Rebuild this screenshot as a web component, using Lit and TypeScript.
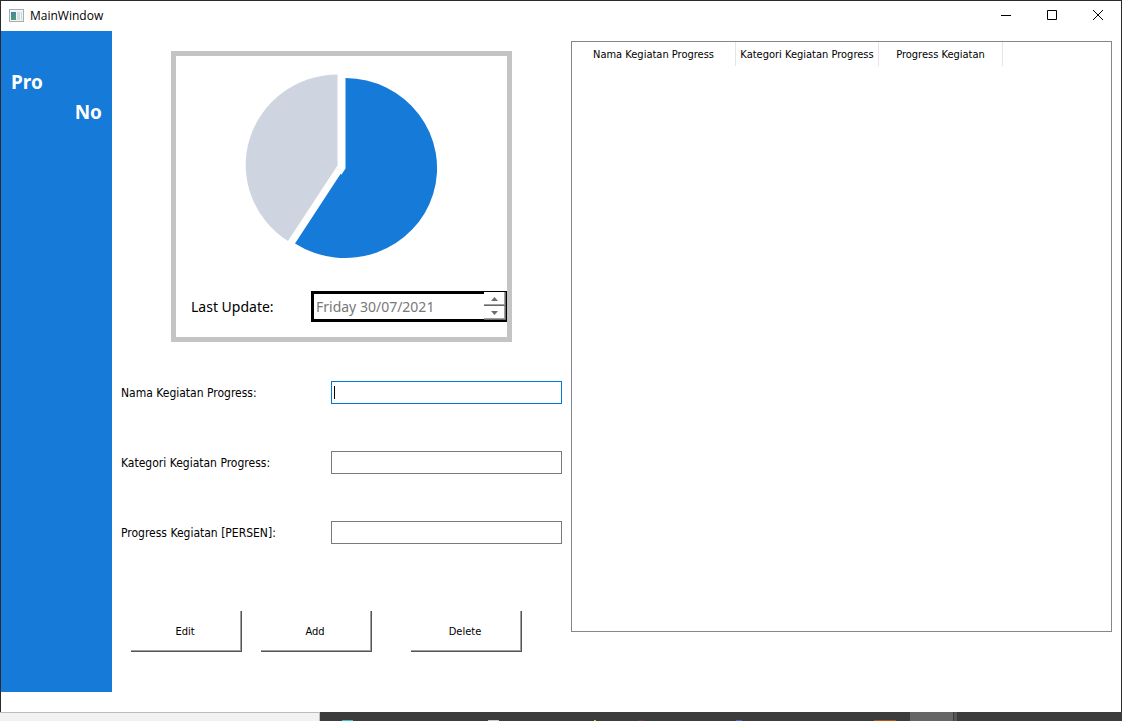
import { LitElement, html, css, svg } from "lit";
import { customElement, state } from "lit/decorators.js";

interface Field {
  id: string;
  label: string;
  focused: boolean;
}

@customElement("progress-pie")
class ProgressPie extends LitElement {
  static styles = css`
    :host { display: block; }
    .pie { display: block; margin: 0 auto; }
  `;

  render() {
    return html`
      <svg class="pie" width="194" height="186" viewBox="245 73 194 186" role="img" aria-label="Progress">
        <path fill="#ced4e0" d="M337.500 74.500 A92.500 90.500 0 0 0 288 241 L337.500 165.500 Z" />
        <path fill="#157ad8" d="M345.500 78 A92 90 0 1 1 295 243.500 L340.500 174 L341.500 174.500 L345.500 168.500 Z" />
      </svg>
    `;
  }
}

@customElement("app-root")
class AppRoot extends LitElement {
  @state() private fields: Field[] = [
    { id: "nama", label: "Nama Kegiatan Progress:", focused: true },
    { id: "kategori", label: "Kategori Kegiatan Progress:", focused: false },
    { id: "persen", label: "Progress Kegiatan [PERSEN]:", focused: false },
  ];

  static styles = css`
    :host {
      display: flex;
      flex-direction: column;
      min-height: 100vh;
      background: #3c3c3c;
      color: #000;
      font: 11px/14px "DejaVu Sans Condensed", "DejaVu Sans", sans-serif;
    }
    * { box-sizing: border-box; }
    button, input { font: inherit; color: inherit; margin: 0; border-radius: 0; }
    .window {
      flex: 1;
      display: flex;
      flex-direction: column;
      background: #fff;
      border: 1px solid #2b2a2d;
      border-bottom: 0;
      padding-bottom: 20px;
    }
    .titlebar { display: flex; align-items: center; height: 30px; padding-left: 8px; }
    .icon { margin-bottom: 2px; }
    .title {
      flex: 1;
      margin: 0 0 0 6px;
      font: 12px/16px "Open Sans", sans-serif;
    }
    .caption { width: 46px; height: 28px; padding: 0 0 2px; border: 0; background: none; }
    .caption svg { display: block; margin: 0 auto; }
    .body { flex: 1; display: grid; grid-template-columns: 111px 459px 1fr; padding-right: 9px; }
    .sidebar {
      background: #157ad8;
      color: #fff;
      padding: 36px 10px;
      font: bold 19px/30px "Noto Sans", sans-serif;
    }
    .sidebar p { margin: 0; }
    .sidebar .end { text-align: right; }
    .main { padding: 20px 9px 0; }
    .card { width: 341px; margin-left: 50px; border: 5px solid #c4c4c4; padding: 17px 0 15px; }
    .update {
      display: flex;
      align-items: center;
      justify-content: space-between;
      margin-top: 32px;
      padding-left: 15px;
      font: 14px/20px "Noto Sans", sans-serif;
    }
    .date { position: relative; width: 196px; }
    .date input {
      display: block;
      width: 100%;
      height: 31px;
      border: 3px solid #000;
      padding: 0 24px 0 2px;
      background: #fff;
      color: #787878;
    }
    .spin { position: absolute; top: 1px; right: 1px; width: 22px; display: grid; }
    .spin button {
      height: 14px;
      padding: 0;
      background: #fff;
      border: solid #696969;
      border-width: 0 1px 1px 0;
      box-shadow: inset -1px -1px #a0a0a0;
    }
    .spin svg { display: block; margin: 0 auto; }
    .fields { display: grid; gap: 47px; margin-top: 39px; }
    .field { display: flex; justify-content: space-between; align-items: center; font-size: 12px; }
    .field input { width: 231px; height: 23px; border: 1px solid #7a7a7a; padding: 0 3px; background: #fff; outline: 0; }
    .field .active {
      border-color: #0078d7;
      background: linear-gradient(#000, #000) 2px 4px / 1px 13px no-repeat #fff;
    }
    .actions { display: flex; gap: 19px; margin: 67px 0 0 10px; }
    .actions button {
      width: 111px;
      height: 41px;
      padding: 2px 2px 0 0;
      background: #fff;
      border: solid #555;
      border-width: 0 1px 1px 0;
      box-shadow: inset -1px -1px #a0a0a0;
    }
    .actions .delete { margin-left: 20px; }
    .records { margin: 10px 0 60px; border: 1px solid #828790; }
    .records table { border-collapse: separate; border-spacing: 0; table-layout: fixed; width: 431px; }
    .records th {
      height: 24px;
      padding: 2px 0 0;
      border-right: 1px solid #e5e5e5;
      font-weight: normal;
      white-space: nowrap;
    }
    .c1 { width: 164px; }
    .c2 { width: 143px; }
    .c3 { width: 124px; }
    .taskbar { display: flex; height: 9px; overflow: hidden; }
    .search { width: 320px; background: #f2f2f2; border: solid #bcbcbc; border-width: 1px 1px 0 0; }
    .taskbar svg { display: block; }
  `;

  private arrow(up: boolean) {
    return html`<svg width="7" height="4" viewBox="0 0 7 4" aria-hidden="true">
      ${up
        ? svg`<path fill="#6d6d6d" d="M0 4 L3.500 0 L7 4 Z" />`
        : svg`<path fill="#6d6d6d" d="M0 0 L3.500 4 L7 0 Z" />`}
    </svg>`;
  }

  render() {
    return html`
      <div class="window">
        <header class="titlebar">
          <svg class="icon" width="15" height="13" viewBox="0 0 15 13" aria-hidden="true">
            <defs>
              <linearGradient id="pane" x1="0" y1="0" x2="0.4" y2="1">
                <stop offset="0" stop-color="#4a7fb0" />
                <stop offset="1" stop-color="#4d9c72" />
              </linearGradient>
            </defs>
            <rect x=".5" y=".5" width="14" height="12" fill="#f4f4f4" stroke="#a9adb3" />
            <rect x="2" y="3" width="5" height="8" fill="url(#pane)" />
            <rect x="8" y="3" width="3" height="8" fill="#d4dde2" />
            <rect x="12" y="3" width="1" height="8" fill="#c3ddd0" />
          </svg>
          <h1 class="title">MainWindow</h1>
          <button class="caption" aria-label="Minimize">
            <svg width="10" height="10" viewBox="0 0 10 10"><path d="M0 5.500H10" stroke="#000" /></svg>
          </button>
          <button class="caption" aria-label="Maximize">
            <svg width="10" height="10" viewBox="0 0 10 10"><path d="M.5 .5H9.500V9.500H.5Z" fill="none" stroke="#000" /></svg>
          </button>
          <button class="caption" aria-label="Close">
            <svg width="10" height="10" viewBox="0 0 10 10"><path d="M0 0L10 10M10 0L0 10" stroke="#000" /></svg>
          </button>
        </header>
        <div class="body">
          <aside class="sidebar">
            <p>Pro</p>
            <p class="end">No</p>
          </aside>
          <main class="main">
            <section class="card">
              <progress-pie></progress-pie>
              <div class="update">
                <label for="updated">Last Update:</label>
                <div class="date">
                  <input id="updated" type="text" readonly value="Friday 30/07/2021" />
                  <div class="spin">
                    <button aria-label="Next day">${this.arrow(true)}</button>
                    <button aria-label="Previous day">${this.arrow(false)}</button>
                  </div>
                </div>
              </div>
            </section>
            <div class="fields">
              ${this.fields.map(
                (f) => html`<div class="field">
                  <label for=${f.id}>${f.label}</label>
                  <input id=${f.id} type="text" class=${f.focused ? "active" : ""} />
                </div>`
              )}
            </div>
            <div class="actions">
              <button>Edit</button>
              <button>Add</button>
              <button class="delete">Delete</button>
            </div>
          </main>
          <section class="records">
            <table>
              <thead>
                <tr>
                  <th class="c1" scope="col">Nama Kegiatan Progress</th>
                  <th class="c2" scope="col">Kategori Kegiatan Progress</th>
                  <th class="c3" scope="col">Progress Kegiatan</th>
                </tr>
              </thead>
            </table>
          </section>
        </div>
      </div>
      <footer class="taskbar">
        <div class="search"></div>
        <svg width="802" height="9" viewBox="320 712 802 9" aria-hidden="true">
          <rect x="910" y="712" width="43" height="9" fill="#666" />
          <rect x="954" y="712" width="3" height="9" fill="#555" />
          <rect x="342" y="720" width="11" height="1" fill="#35c3d8" />
          <rect x="488" y="720" width="11" height="1" fill="#c8c8c8" />
          <rect x="543" y="720" width="2" height="1" fill="#1d4f7c" />
          <rect x="594" y="720" width="2" height="1" fill="#d6c835" />
          <rect x="638" y="720" width="6" height="1" fill="#6b3a30" />
          <rect x="736" y="720" width="6" height="1" fill="#4c5cf0" />
          <rect x="874" y="720" width="22" height="1" fill="#b55410" />
        </svg>
      </footer>
    `;
  }
}
